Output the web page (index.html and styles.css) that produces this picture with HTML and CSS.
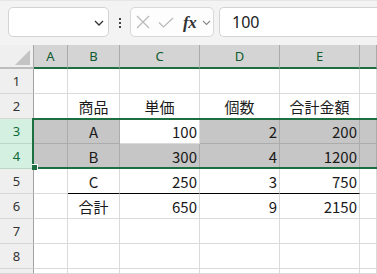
FILE: index.html
```html
<!DOCTYPE html>
<html lang="ja">
<head>
<meta charset="utf-8">
<link rel="stylesheet" href="styles.css">
</head>
<body>
<div class="toolbar">
  <div class="namebox">
    <svg class="chev" width="10" height="6" viewBox="0 0 10 6"><path d="M1 1 L5 5 L9 1" fill="none" stroke="#333" stroke-width="1.3"/></svg>
  </div>
  <div class="dots"><i></i><i></i><i></i></div>
  <div class="fbox">
    <svg class="ico-x" width="14" height="14" viewBox="0 0 14 14"><path d="M1 1 L13 13 M13 1 L1 13" stroke="#b9b9b9" stroke-width="1.2" fill="none"/></svg>
    <svg class="ico-ok" width="16" height="11" viewBox="0 0 16 11"><path d="M1 5.5 L5.5 10 L15 1" stroke="#b9b9b9" stroke-width="1.2" fill="none"/></svg>
    <span class="fx">fx</span>
    <svg class="chev2" width="9" height="6" viewBox="0 0 9 6"><path d="M1 1 L4.5 4.5 L8 1" fill="none" stroke="#8a8a8a" stroke-width="1.1"/></svg>
  </div>
  <div class="input">100</div>
</div>
<div class="sheet">
  <div class="corner"><span class="tri"></span></div>
  <div class="ch">A</div><div class="ch">B</div><div class="ch">C</div><div class="ch">D</div><div class="ch">E</div><div class="ch"></div>

  <div class="rh">1</div>
  <div class="c"></div><div class="c"></div><div class="c"></div><div class="c"></div><div class="c"></div><div class="c"></div>

  <div class="rh">2</div>
  <div class="c"></div><div class="c ctr">商品</div><div class="c ctr">単価</div><div class="c ctr">個数</div><div class="c ctr">合計金額</div><div class="c"></div>

  <div class="rh on">3</div>
  <div class="c g"></div><div class="c g ctr">A</div><div class="c num">100</div><div class="c g num">2</div><div class="c g num">200</div><div class="c g"></div>

  <div class="rh on">4</div>
  <div class="c g"></div><div class="c g ctr">B</div><div class="c g num">300</div><div class="c g num">4</div><div class="c g num">1200</div><div class="c g"></div>

  <div class="rh">5</div>
  <div class="c"></div><div class="c ctr bb">C</div><div class="c num bb">250</div><div class="c num bb">3</div><div class="c num bb">750</div><div class="c"></div>

  <div class="rh">6</div>
  <div class="c"></div><div class="c ctr">合計</div><div class="c num">650</div><div class="c num">9</div><div class="c num">2150</div><div class="c"></div>

  <div class="rh">7</div>
  <div class="c"></div><div class="c"></div><div class="c"></div><div class="c"></div><div class="c"></div><div class="c"></div>

  <div class="rh">8</div>
  <div class="c"></div><div class="c"></div><div class="c"></div><div class="c"></div><div class="c"></div><div class="c"></div>

  <div class="rh"></div>
  <div class="c"></div><div class="c"></div><div class="c"></div><div class="c"></div><div class="c"></div><div class="c"></div>

  <div class="sel"><span class="handle"></span></div>
</div>
</body>
</html>
```
FILE: styles.css
```css
* { box-sizing: border-box; }
html, body { margin: 0; padding: 0; }
body {
  width: 377px;
  height: 274px;
  overflow: hidden;
  background: #ffffff;
  font-family: "Noto Sans CJK JP", sans-serif;
}

.toolbar {
  height: 45px;
  background: #f3f3f3;
  border-top: 1px solid #e6e6e6;
  padding: 6px 0 0 8px;
  display: flex;
  align-items: flex-start;
  white-space: nowrap;
  overflow: hidden;
}
.namebox {
  flex: none;
  width: 101px;
  height: 30px;
  background: #ffffff;
  border: 1px solid #d3d3d3;
  border-radius: 5px;
  display: flex;
  align-items: center;
  justify-content: flex-end;
  padding-right: 4px;
}
.namebox .chev { margin-top: 2px; }
.dots {
  flex: none;
  margin-left: 10px;
  margin-top: 11px;
  display: flex;
  flex-direction: column;
  gap: 2px;
}
.dots i {
  display: block;
  width: 2px;
  height: 2px;
  background: #444;
}
.fbox {
  flex: none;
  margin-left: 9px;
  width: 84px;
  height: 30px;
  background: #fdfdfd;
  border: 1px solid #d8d8d8;
  border-radius: 5px;
  display: flex;
  align-items: center;
  padding-left: 5px;
}
.ico-ok { margin-left: 8px; margin-top: 1px; }
.fx {
  margin-left: 9px;
  font-family: "Liberation Serif", serif;
  font-style: italic;
  font-weight: bold;
  font-size: 17px;
  color: #333;
  line-height: 1;
  letter-spacing: -0.5px;
}
.chev2 { margin-left: 6px; margin-top: 1px; }
.input {
  flex: none;
  margin-left: 5px;
  width: 160px;
  height: 30px;
  background: #ffffff;
  border: 1px solid #d3d3d3;
  border-right: none;
  border-radius: 5px 0 0 5px;
  padding-left: 12px;
  display: flex;
  align-items: center;
  font-family: "Noto Sans", sans-serif;
  font-size: 16px;
  color: #222;
}

.sheet {
  position: relative;
  display: grid;
  grid-template-columns: 34px 34px 52px 80px 80px 80px 17px;
  grid-template-rows: 24px repeat(8, 25px) 5px;
  overflow: hidden;
  height: 229px;
}
.corner {
  position: relative;
  background: #efefef;
  border-right: 1px solid #a6a6a6;
  border-bottom: 2px solid #bdbdbd;
}
.tri {
  position: absolute;
  left: 15px;
  top: 5px;
  width: 15px;
  height: 15px;
  background: #c4c4c4;
  clip-path: polygon(100% 0, 100% 100%, 0 100%);
}
.ch {
  background: #d4d4d4;
  border-right: 1px solid #aaaaaa;
  border-bottom: 2px solid #1d6f42;
  display: flex;
  align-items: center;
  justify-content: center;
  font-family: "Noto Sans", sans-serif;
  font-size: 13px;
  color: #0f5a2f;
  padding-bottom: 1px;
}
.rh {
  background: #efefef;
  border-right: 1px solid #a3a3a3;
  border-bottom: 1px solid #d6d6d6;
  display: flex;
  align-items: center;
  justify-content: center;
  font-family: "Noto Sans", sans-serif;
  font-size: 13px;
  color: #333;
}
.rh.on {
  background: #d3f0e0;
  color: #0f6a38;
  border-bottom-color: #bcd6c7;
}
.c {
  border-right: 1px solid #dadada;
  border-bottom: 1px solid #dadada;
  display: flex;
  align-items: center;
  padding: 0 2px;
  font-size: 15px;
  color: #1a1a1a;
  white-space: nowrap;
}
.ctr { justify-content: center; }
.num { justify-content: flex-end; }
.g {
  background: #c6c6c6;
  border-color: #acacac;
}
.bb { border-bottom-color: #000000; }

.sel {
  position: absolute;
  left: 32px;
  top: 73px;
  width: 360px;
  height: 51px;
  border: 2px solid #1d6f42;
}
.handle {
  position: absolute;
  left: -2px;
  bottom: -3px;
  width: 6px;
  height: 6px;
  background: #1d6f42;
  border-top: 1px solid #ffffff;
  border-right: 1px solid #ffffff;
}
```
